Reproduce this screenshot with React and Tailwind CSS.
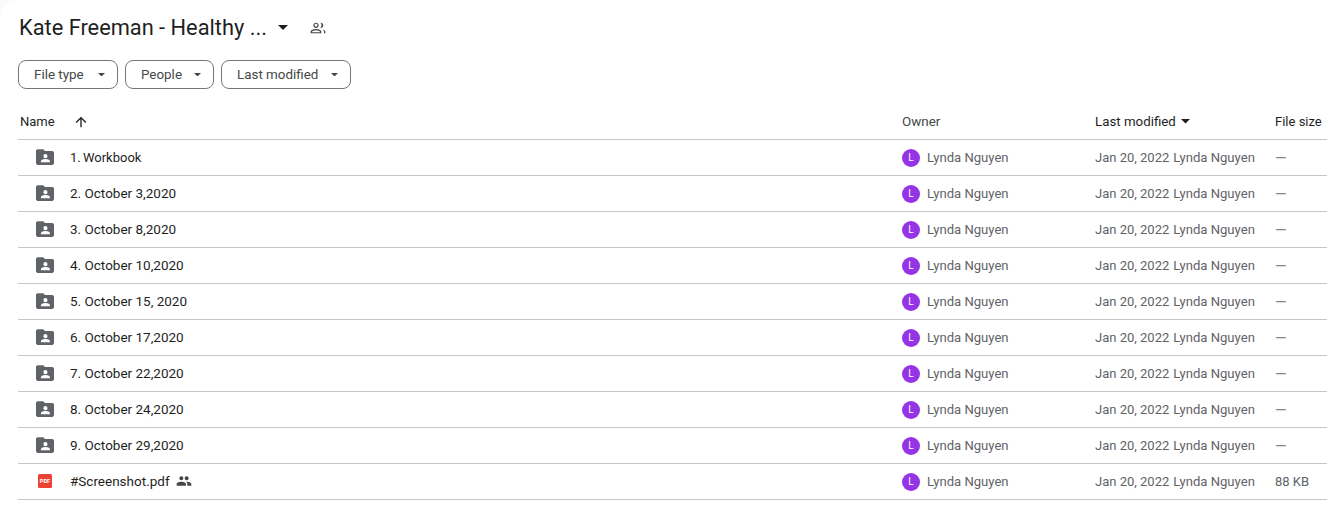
import React from "react";

const ROWS = [
  "1. Workbook",
  "2. October 3,2020",
  "3. October 8,2020",
  "4. October 10,2020",
  "5. October 15, 2020",
  "6. October 17,2020",
  "7. October 22,2020",
  "8. October 24,2020",
  "9. October 29,2020",
];

const Caret = ({ className }) => (
  <svg viewBox="0 0 10 5" className={className} fill="currentColor">
    <path d="M0 0l5 5 5-5z" />
  </svg>
);

const SharedFolder = () => (
  <svg width="18" height="16" viewBox="0 0 20 17.500" fill="#5f6368">
    <path d="M2 0h6l2 2h8c1.100 0 2 .9 2 2v11.500c0 1.100-.9 2-2 2H2c-1.100 0-2-.9-2-2V2C0 .9.900 0 2 0zm8.500 5.500a2.300 2.300 0 100 4.600 2.300 2.300 0 000-4.600zM5.500 14.500h10v-1c0-1.700-3.400-2.500-5-2.500s-5 .8-5 2.500z" fillRule="evenodd" />
  </svg>
);

const PdfIcon = () => (
  <svg width="14" height="14" viewBox="0 0 14 14">
    <rect width="14" height="14" rx="1.500" fill="#ea4335" />
    <text x="7" y="9.200" textAnchor="middle" fontSize="5.600" fontWeight="700" fill="#fff" fontFamily="Roboto, sans-serif">PDF</text>
  </svg>
);

const PeopleIcon = ({ className }) => (
  <svg viewBox="0 0 24 24" className={className} fill="currentColor">
    <path d="M16 11c1.660 0 2.990-1.340 2.990-3S17.660 5 16 5s-3 1.340-3 3 1.340 3 3 3zm-8 0c1.660 0 2.990-1.340 2.990-3S9.660 5 8 5 5 6.340 5 8s1.340 3 3 3zm0 2c-2.330 0-7 1.170-7 3.500V19h14v-2.500C15 14.170 10.330 13 8 13zm8 0c-.29 0-.62.02-.97.05 1.160.84 1.970 1.970 1.970 3.450V19h6v-2.500c0-2.330-4.670-3.500-7-3.500z" />
  </svg>
);

const PeopleOutline = ({ className }) => (
  <svg viewBox="0 0 24 24" className={className} fill="currentColor">
    <path d="M9 12c2.200 0 4-1.800 4-4s-1.800-4-4-4-4 1.800-4 4 1.800 4 4 4zm0-6.200c1.200 0 2.200 1 2.200 2.200s-1 2.200-2.200 2.200-2.200-1-2.200-2.200 1-2.200 2.200-2.200zM9 13.500c-2.700 0-8 1.300-8 4V20h16v-2.500c0-2.700-5.300-4-8-4zM2.900 18.200v-.7c.3-.9 3.700-2.200 6.100-2.200s5.800 1.300 6.100 2.200v.7H2.900zM15.500 4.100c1.100.9 1.800 2.300 1.800 3.900s-.7 3-1.800 3.900c.2 0 .3.100.5.100 2.200 0 4-1.800 4-4s-1.800-4-4-4c-.2 0-.3 0-.5.100zM18.300 13.900c1.600.9 2.700 2.100 2.700 3.600V20h2v-2.500c0-1.700-2.200-3-4.700-3.600z" />
  </svg>
);

const Filter = ({ label, width }) => (
  <button className={`flex h-[29px] items-center justify-between rounded-lg border border-[#747775] pl-[15px] pr-[12px] text-[13.4px] leading-[20px] text-[#444746] ${width}`}>
    <span className="pt-px">{label}</span>
    <Caret className="h-[3.500px] w-[7px] text-[#444746]" />
  </button>
);

const Row = ({ icon, name, nameClass, shared, size }) => (
  <div className="flex h-9 items-center border-b border-[#c7c7c7] text-[13px] leading-[20px]">
    <div className="flex w-[884px] items-center">
      <div className="-mt-px flex w-[52px] justify-center pl-[1px]">{icon}</div>
      <span className={`text-[#1f1f1f] ${nameClass}`}>{name}</span>
      {shared && <PeopleIcon className="-mt-px ml-[6px] h-4 w-4 text-[#444746]" />}
    </div>
    <div className="flex w-[193px] items-center gap-[7px] text-[13.100px] text-[#5f6368]">
      <div className="mt-px flex h-[18px] w-[18px] items-center justify-center rounded-full bg-[#9334e6] text-[10px] text-white">L</div>
      Lynda Nguyen
    </div>
    <div className="flex w-[180px] gap-[4px] text-[#5f6368]">
      <span>Jan 20, 2022</span>
      <span className="text-[13.100px]">Lynda Nguyen</span>
    </div>
    <div className="text-[#5f6368]">
      {size === "—" ? <span className="inline-block pt-[2px] text-[15px] text-[#80868b]">—</span> : size}
    </div>
  </div>
);

export default function App() {
  return (
    <div className="h-[510px] overflow-hidden bg-[#f8fafd] font-['Roboto',sans-serif]">
      <div className="h-full rounded-tl-[16px] bg-white pl-[18px]">
        <div className="flex h-[42px] items-end pl-[1px]">
          <h1 className="text-[21.800px] leading-[28px] text-[#1f1f1f]">Kate Freeman - Healthy ...</h1>
          <Caret className="mb-[12px] ml-[11px] h-[5px] w-[10px] text-[#1f1f1f]" />
          <PeopleOutline className="mb-[6px] ml-[22px] h-4 w-4 text-[#444746]" />
        </div>
        <div className="mt-[18px] flex gap-[7px]">
          <Filter label="File type" width="w-[100px]" />
          <Filter label="People" width="w-[89px]" />
          <Filter label="Last modified" width="w-[130px]" />
        </div>
        <div className="mt-[15px] flex h-[36px] items-center border-b border-[#c7c7c7] text-[13px] leading-[20px] text-[#1f1f1f]">
          <div className="flex w-[884px] items-center pl-[2px]">
            <span className="w-[53px]">Name</span>
            <svg viewBox="0 0 24 24" className="h-4 w-4" fill="#1f1f1f">
              <path d="M4 12l1.410 1.410L11 7.830V20h2V7.830l5.580 5.590L20 12l-8-8z" />
            </svg>
          </div>
          <div className="w-[193px] text-[13.400px] text-[#444746]">Owner</div>
          <div className="flex w-[180px] items-center gap-[5px] text-[13.300px]">
            Last modified
            <Caret className="h-[4.500px] w-[9px] text-[#1f1f1f]" />
          </div>
          <div>File size</div>
        </div>
        {ROWS.map((name, i) => (
          <Row
            key={name}
            icon={<SharedFolder />}
            name={name}
            nameClass={i === 0 ? "text-[13px] [word-spacing:-1px]" : "-mt-px text-[13.500px]"}
            size="—"
          />
        ))}
        <Row icon={<PdfIcon />} name="#Screenshot.pdf" nameClass="-mt-px text-[13.500px]" shared size="88 KB" />
      </div>
    </div>
  );
}
